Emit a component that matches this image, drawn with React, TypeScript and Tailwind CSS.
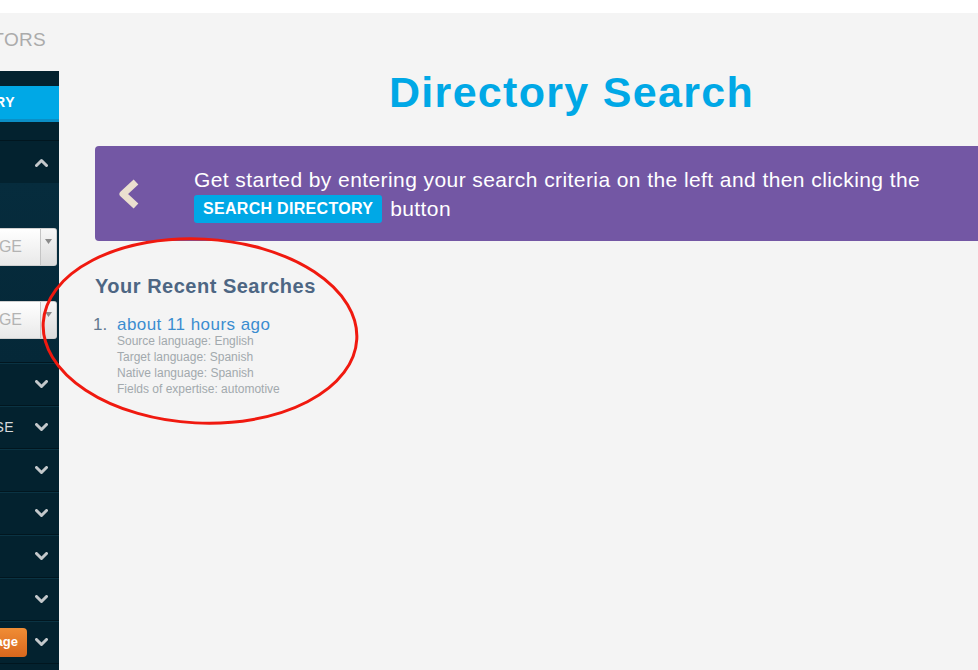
import React from "react";

const font = { fontFamily: '"Liberation Sans", Arial, sans-serif' };

function ChevronDown({ up = false }: { up?: boolean }) {
    return (
        <svg width="13" height="9" viewBox="0 0 13 9" className="shrink-0">
            <polyline
                points={up ? "1.5,7.5 6.5,2.5 11.5,7.5" : "1.5,1.5 6.5,6.5 11.5,1.5"}
                fill="none"
                stroke="#c3c8cb"
                strokeWidth="3"
                strokeLinecap="round"
                strokeLinejoin="round"
            />
        </svg>
    );
}

function SelectBox({ label }: { label: string }) {
    return (
        <div className="h-[38px] w-[57px] flex rounded-r-[3px] overflow-hidden bg-gradient-to-b from-white to-[#e9e9e9] border-y border-r border-[#d0d0d0]">
            <div className="w-[40px] flex justify-end items-center overflow-hidden whitespace-nowrap pr-[18px] text-[16px] text-[#b3b3b3]">
                {label}
            </div>
            <div className="flex-1 border-l border-[#c4c4c4] bg-gradient-to-b from-[#f7f7f7] to-[#dcdcdc] flex justify-center pt-[10px]">
                <svg width="7" height="5" viewBox="0 0 7 5">
                    <polygon points="0,0 7,0 3.5,5" fill="#8a8a8a" />
                </svg>
            </div>
        </div>
    );
}

function SideRow({ children }: { children?: React.ReactNode }) {
    return (
        <div className="h-[43px] flex items-center border-t border-[#01161f] shadow-[inset_0_1px_0_#0a3343]">
            <div className="flex-1 flex justify-end items-center overflow-hidden whitespace-nowrap pr-[21px] h-full">
                {children}
            </div>
            <div className="w-[24px] flex items-center">
                <ChevronDown />
            </div>
        </div>
    );
}

export default function App() {
    const details = [
        "Source language: English",
        "Target language: Spanish",
        "Native language: Spanish",
        "Fields of expertise: automotive",
    ];

    return (
        <div className="w-[978px] h-[670px] overflow-hidden bg-[#f4f4f4] flex flex-col relative" style={font}>
            <div className="h-[13px] bg-white shrink-0" />
            <div className="flex flex-1 min-h-0">
                {/* left column */}
                <div className="w-[59px] shrink-0 flex flex-col">
                    <div className="h-[58px] flex justify-end items-start overflow-hidden whitespace-nowrap pr-[13px] pt-[13px] text-[19px] text-[#ababab] tracking-[0.3px]">
                        TRANSLATORS
                    </div>
                    <div className="flex-1 bg-[#03222f] flex flex-col">
                        <div className="h-[15px]" />
                        <div className="h-[36px] bg-[#00a8e6] border-b-[3px] border-[#0b8fc6] flex justify-end items-center overflow-hidden whitespace-nowrap pr-[44px] text-[14px] font-bold text-white tracking-[0.5px]">
                            SEARCH DIRECTORY
                        </div>
                        <div className="h-[18px]" />
                        <div className="h-[43px] flex items-center justify-end border-t border-[#01161f] pr-[11px]">
                            <ChevronDown up />
                        </div>
                        <div className="h-[179px] bg-gradient-to-b from-[#062c3d] to-[#052838] flex flex-col pt-[45px] gap-[35px]">
                            <SelectBox label="SELECT LANGUAGE" />
                            <SelectBox label="SELECT LANGUAGE" />
                        </div>
                        <SideRow />
                        <SideRow>
                            <span className="text-[14px] text-[#d7dadc] tracking-[0.4px]">EXPERTISE</span>
                        </SideRow>
                        <SideRow />
                        <SideRow />
                        <SideRow />
                        <SideRow />
                        <div className="h-[43px] flex items-center border-t border-[#01161f] shadow-[inset_0_1px_0_#0a3343]">
                            <div className="flex-1 flex justify-end items-center overflow-hidden whitespace-nowrap pr-[8px] h-full">
                                <span className="h-[29px] flex items-center pl-3 pr-[9px] rounded-r-[4px] bg-gradient-to-b from-[#f08d35] to-[#d8671d] text-[13px] font-bold text-white">
                                    Language
                                </span>
                            </div>
                            <div className="w-[24px] flex items-center">
                                <ChevronDown />
                            </div>
                        </div>
                        <div className="flex-1 border-t border-[#01161f]" />
                    </div>
                </div>

                {/* main */}
                <div className="w-[987px] shrink-0 pl-[36px] flex flex-col">
                    <h1 className="mt-[53px] h-[52px] leading-[52px] text-center text-[43px] font-bold tracking-[1.3px] text-[#00a8e6] pl-[2px]">
                        Directory Search
                    </h1>
                    <div className="mt-[28px] h-[95px] bg-[#7357a4] rounded-[4px] flex items-center">
                        <div className="w-[99px] pl-[22px] flex items-center">
                            <svg width="24" height="32" viewBox="0 0 24 32">
                                <polyline
                                    points="19,4 6,16 19,28"
                                    fill="none"
                                    stroke="#ebe0cf"
                                    strokeWidth="7"
                                    strokeLinecap="butt"
                                    strokeLinejoin="round"
                                />
                            </svg>
                        </div>
                        <div className="text-white text-[21px] tracking-[0.42px] leading-[29px] pt-[1px]">
                            <div>Get started by entering your search criteria on the left and then clicking the</div>
                            <div className="flex items-center">
                                <span className="h-[28px] px-[9px] bg-[#00a8e6] rounded-[3px] text-[16px] font-bold tracking-[0.3px] flex items-center mr-[8px]">
                                    SEARCH DIRECTORY
                                </span>
                                <span>button</span>
                            </div>
                        </div>
                    </div>

                    <h2 className="mt-[33px] text-[20px] leading-[24px] font-bold tracking-[0.5px] text-[#4d6683]">
                        Your Recent Searches
                    </h2>
                    <ol className="mt-[18px] -ml-[2px]">
                        <li className="flex">
                            <span className="w-[24px] text-[17px] leading-[18px] text-[#62788f]">1.</span>
                            <div>
                                <a className="block text-[17px] leading-[18px] tracking-[0.45px] text-[#3b8dd0]">
                                    about 11 hours ago
                                </a>
                                <div className="mt-[-1px]">
                                    {details.map((d) => (
                                        <div key={d} className="text-[12px] leading-[16px] text-[#a2a9ad]">
                                            {d}
                                        </div>
                                    ))}
                                </div>
                            </div>
                        </li>
                    </ol>
                </div>
            </div>

            {/* red annotation circle */}
            <svg className="absolute left-0 top-0 pointer-events-none" width="978" height="670">
                <ellipse
                    cx="200"
                    cy="331"
                    rx="157"
                    ry="92"
                    transform="rotate(3 200 331)"
                    fill="none"
                    stroke="#f0190f"
                    strokeWidth="3"
                />
            </svg>
        </div>
    );
}
